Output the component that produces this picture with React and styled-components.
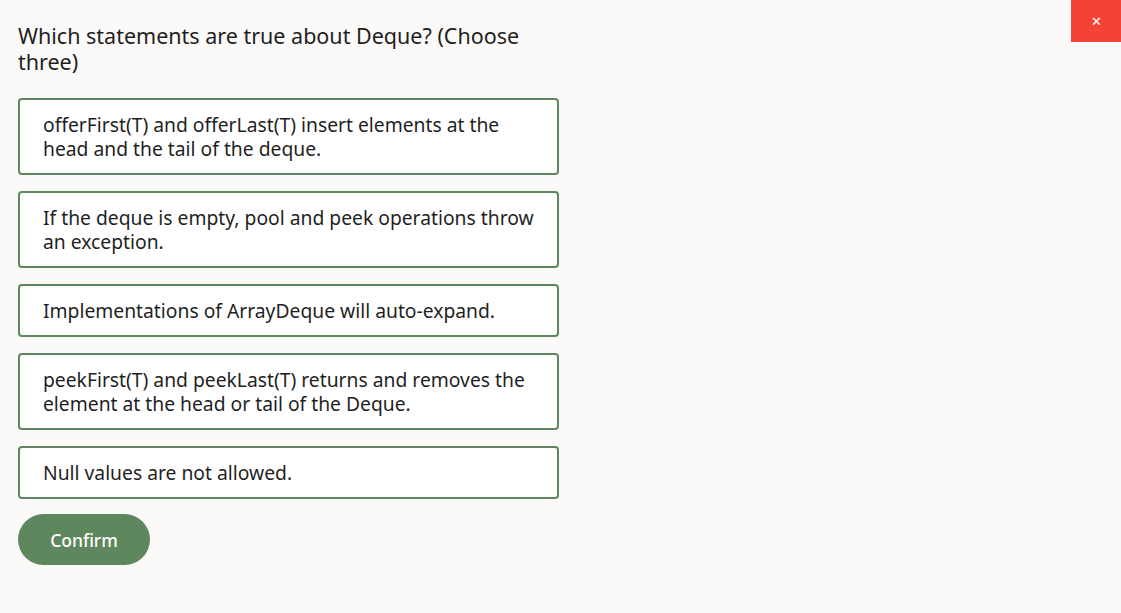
import React, { useState } from 'react';
import styled, { createGlobalStyle } from 'styled-components';

const GlobalStyle = createGlobalStyle`
  html, body {
    margin: 0;
    padding: 0;
    background: #fbfaf8;
    font-family: 'Noto Sans', 'Open Sans', sans-serif;
    color: #1f1f1f;
  }
`;

const Page = styled.div`
  position: relative;
  min-height: 613px;
  padding: 23px 18px;
  box-sizing: border-box;
`;

const CloseButton = styled.button`
  position: absolute;
  top: 0;
  right: 0;
  width: 50px;
  height: 42px;
  border: none;
  background: #f44336;
  color: #fff;
  font-size: 13px;
  cursor: pointer;
  display: flex;
  align-items: center;
  justify-content: center;
  padding: 0;
`;

const Quiz = styled.div`
  width: 541px;
  display: flex;
  flex-direction: column;
`;

const Question = styled.h1`
  margin: 0 0 23px;
  font-size: 21.5px;
  line-height: 26px;
  font-weight: 400;
  color: #1f1f1f;
`;

const Options = styled.div`
  display: flex;
  flex-direction: column;
  gap: 16px;
`;

const Option = styled.div`
  border: 2px solid ${(p) => (p.$selected ? '#3e6b3f' : '#5f8660')};
  background: ${(p) => (p.$selected ? '#e6efe5' : '#fff')};
  border-radius: 4px;
  padding: 12.5px 16px 12.5px 23px;
  font-size: 19.3px;
  line-height: 24px;
  cursor: pointer;
`;

const Confirm = styled.button`
  margin-top: 15px;
  width: 132px;
  height: 51px;
  border: none;
  border-radius: 26px;
  background: #5f875e;
  color: #fff;
  font-family: inherit;
  font-size: 17.5px;
  font-weight: 500;
  cursor: pointer;
`;

const options = [
  'offerFirst(T) and offerLast(T) insert elements at the head and the tail of the deque.',
  'If the deque is empty, pool and peek operations throw an exception.',
  'Implementations of ArrayDeque will auto-expand.',
  'peekFirst(T) and peekLast(T) returns and removes the element at the head or tail of the Deque.',
  'Null values are not allowed.',
];

const App = () => {
  const [selected, setSelected] = useState([]);

  const toggle = (i) => {
    setSelected((s) => (s.includes(i) ? s.filter((x) => x !== i) : [...s, i]));
  };

  return (
    <Page>
      <GlobalStyle />
      <CloseButton aria-label='Close'>✕</CloseButton>
      <Quiz>
        <Question>Which statements are true about Deque? (Choose three)</Question>
        <Options>
          {options.map((text, i) => (
            <Option key={i} $selected={selected.includes(i)} onClick={() => toggle(i)}>
              {text}
            </Option>
          ))}
        </Options>
        <div>
          <Confirm>Confirm</Confirm>
        </div>
      </Quiz>
    </Page>
  );
};

export default App;
